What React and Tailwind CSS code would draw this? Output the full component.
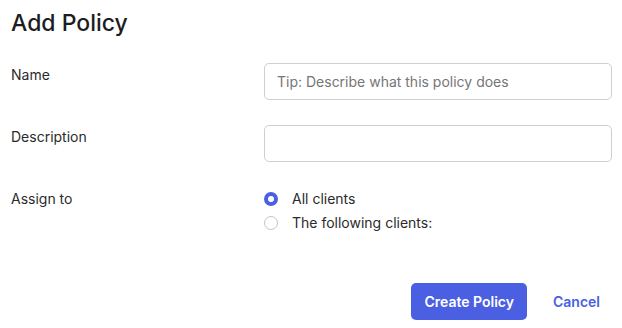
import { useState } from 'react'

function Radio({ checked, label, onClick }) {
  return (
    <label className="flex items-center h-6 cursor-pointer" onClick={onClick}>
      {checked ? (
        <span className="w-[14px] h-[14px] rounded-full border-[4px] border-[#4a5fe2] bg-white" />
      ) : (
        <span className="w-[14px] h-[14px] rounded-full border-[1.5px] border-[#c4c4c4] bg-white" />
      )}
      <span className="ml-[14px] text-sm text-[#2b2b2b]">{label}</span>
    </label>
  )
}

export default function App() {
  const [assign, setAssign] = useState('all')

  return (
    <div className="w-[622px] h-[328px] bg-white pl-[11px] pr-[10px] pt-[7px] font-['Inter',sans-serif]">
      <h1 className="text-[23px] leading-8 font-medium text-[#1d1d1f] mb-6">Add Policy</h1>

      <div className="grid grid-cols-[253px_1fr] gap-y-[25px]">
        <div className="pt-[2px] text-sm leading-5 text-[#2b2b2b]">Name</div>
        <input
          className="h-[37px] w-full border border-[#cfcfcf] rounded-[5px] px-3 text-sm text-[#2b2b2b] placeholder:text-[#767676] outline-none"
          placeholder="Tip: Describe what this policy does"
        />

        <div className="pt-[2px] text-sm leading-5 text-[#2b2b2b]">Description</div>
        <input className="h-[37px] w-full border border-[#cfcfcf] rounded-[5px] px-3 text-sm outline-none" />

        <div className="pt-[2px] text-sm leading-5 text-[#2b2b2b]">Assign to</div>
        <div className="flex flex-col">
          <Radio checked={assign === 'all'} label="All clients" onClick={() => setAssign('all')} />
          <Radio checked={assign === 'some'} label="The following clients:" onClick={() => setAssign('some')} />
        </div>
      </div>

      <div className="flex justify-end items-center gap-[14px] mt-[48px]">
        <button className="h-[37px] px-[13px] rounded-[5px] bg-[#4a5fe2] text-white text-sm font-semibold">
          Create Policy
        </button>
        <button className="h-[37px] px-3 text-sm font-semibold text-[#4a5fe2]">Cancel</button>
      </div>
    </div>
  )
}
